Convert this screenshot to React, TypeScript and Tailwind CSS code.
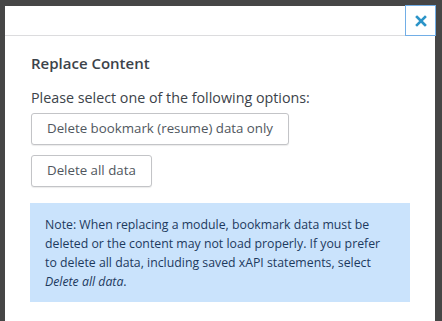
import React from "react";

export default function App() {
  return (
    <div
      className="w-[442px] h-[321px] bg-[#464646] overflow-hidden pt-[6px] pl-[5px]"
      style={{ fontFamily: '"Open Sans", "Noto Sans", sans-serif' }}
    >
      <div className="w-[430px] h-[330px] bg-white relative">
        <div className="h-[30px] border-b border-[#dcdcde]" />
        <button className="absolute right-[-1px] top-[-1px] w-[31px] h-[31px] border border-[#72aee6] bg-white flex items-center justify-center">
          <svg width="12" height="12" viewBox="0 0 12 12">
            <path d="M2 2 L10 10 M10 2 L2 10" stroke="#2b94c8" strokeWidth="2.6" strokeLinecap="square" />
          </svg>
        </button>
        <div className="pl-[26px] pr-[25px] pt-[17px]">
          <h2 className="text-[15px] font-semibold text-[#3c434a] leading-[20px]">Replace Content</h2>
          <p className="mt-[15px] text-[14.3px] text-[#3c434a] leading-[20px]">
            Please select one of the following options:
          </p>
          <div className="mt-[5px] flex flex-col items-start gap-[10px]">
            <button className="h-[32px] px-[15px] border border-[#c3c4c7] rounded-[3px] text-[13.3px] text-[#50575e] bg-white shadow-[0_1px_1px_rgba(0,0,0,0.08)]">
              Delete bookmark (resume) data only
            </button>
            <button className="h-[32px] px-[15px] border border-[#c3c4c7] rounded-[3px] text-[13.3px] text-[#50575e] bg-white shadow-[0_1px_1px_rgba(0,0,0,0.08)]">
              Delete all data
            </button>
          </div>
          <div className="mt-[16px] w-[380px] -ml-[1px] bg-[#cae3fc] px-[15px] pt-[12px] pb-[11px] text-[12.3px] leading-[19px] text-[#1d3a5e]">
            Note: When replacing a module, bookmark data must be deleted or the content may not load properly. If you prefer to delete all data, including saved xAPI statements, select <em>Delete all data</em>.
          </div>
        </div>
      </div>
    </div>
  );
}
